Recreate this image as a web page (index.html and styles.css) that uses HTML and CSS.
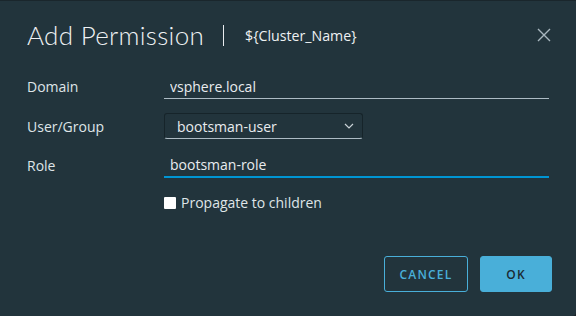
FILE: index.html
```html
<!DOCTYPE html>
<html lang="en">
<head>
  <meta charset="UTF-8" />
  <title>Add Permission</title>
  <link rel="stylesheet" href="styles.css">
</head>
<body>
  <div class="modal" role="dialog" aria-labelledby="modal-title">
    <header class="modal-header">
      <h1 id="modal-title">Add Permission</h1>
      <span class="divider"></span>
      <span class="subtitle">${Cluster_Name}</span>
      <button class="close" aria-label="Close">
        <svg width="14" height="14" viewBox="0 0 14 14"><path d="M1 1 L13 13 M13 1 L1 13" stroke="currentColor" stroke-width="1.4" fill="none"/></svg>
      </button>
    </header>

    <form class="modal-body">
      <div class="row">
        <label for="domain">Domain</label>
        <input id="domain" class="text-input" type="text" value="vsphere.local" />
      </div>
      <div class="row">
        <label for="user">User/Group</label>
        <div class="select">
          <span>bootsman-user</span>
          <svg width="10" height="6" viewBox="0 0 10 6"><path d="M1 1 L5 5 L9 1" stroke="currentColor" stroke-width="1.2" fill="none"/></svg>
        </div>
      </div>
      <div class="row">
        <label for="role">Role</label>
        <input id="role" class="text-input focused" type="text" value="bootsman-role" />
      </div>
      <div class="row check-row">
        <span></span>
        <label class="checkbox"><span class="box"></span>Propagate to children</label>
      </div>
    </form>

    <footer class="modal-footer">
      <button class="btn btn-outline">Cancel</button>
      <button class="btn btn-primary">OK</button>
    </footer>
  </div>
</body>
</html>
```

FILE: styles.css
```css
/* Variables & Reset */
:root {
  --bg: #22343c;
  --text: #e9ecef;
  --label: #dfe5e8;
  --line: #adbbc4;
  --primary: #49afd9;
  --focus: #0095d3;
}
* { margin: 0; padding: 0; box-sizing: border-box; }
body { background: #1b2227; font-family: 'Open Sans', sans-serif; color: var(--text); }

.modal { width: 576px; height: 316px; background: var(--bg); border-top: 1px solid #1a262c; border-radius: 0 0 4px 0; padding: 0 24px 24px 27px; display: flex; flex-direction: column; }

/* Header */
.modal-header { display: flex; align-items: center; height: 66px; padding-top: 2px; }
.modal-header h1 { font-family: 'Lato', sans-serif; font-size: 26px; font-weight: 300; color: #eef1f3; letter-spacing: 0.3px; }
.divider { width: 1px; height: 21px; background: #e9ecef; margin: 0 21px 0 19px; }
.subtitle { font-size: 14.2px; color: #eef1f3; }
.close { margin-left: auto; background: none; border: 0; color: #a9b7bf; display: flex; margin-right: 1px; }

/* Form */
.modal-body { display: flex; flex-direction: column; }
.row { display: grid; grid-template-columns: 137px 385px; align-items: center; height: 39.5px; }
.row.check-row { height: 34px; }
.row label { font-size: 14px; color: var(--label); }
.text-input { background: none; border: 0; border-bottom: 1px solid var(--line); color: var(--text); font: 14px 'Open Sans', sans-serif; height: 25px; padding: 0 6px; outline: none; }
.text-input.focused { border-bottom: 2px solid var(--focus); }
.select { width: 199px; height: 26px; border: 1px solid #16242a; border-bottom-color: var(--line); border-radius: 3px; display: flex; align-items: center; justify-content: space-between; padding: 0 8px 0 12px; font-size: 14px; color: var(--text); }
.select svg { color: #c9d2d7; }
.checkbox { display: flex; align-items: center; gap: 5px; }
.box { width: 12px; height: 12px; background: #fff; border-radius: 1px; }

/* Footer */
.modal-footer { margin-top: auto; display: flex; justify-content: flex-end; gap: 12px; }
.btn { height: 36px; border-radius: 3px; font: 600 12px 'Open Sans', sans-serif; letter-spacing: 1.2px; text-transform: uppercase; padding: 0; }
.btn-outline { width: 84px; background: none; border: 1px solid var(--primary); color: var(--primary); }
.btn-primary { width: 72px; background: var(--primary); border: 1px solid var(--primary); color: #1b2a32; }
```
